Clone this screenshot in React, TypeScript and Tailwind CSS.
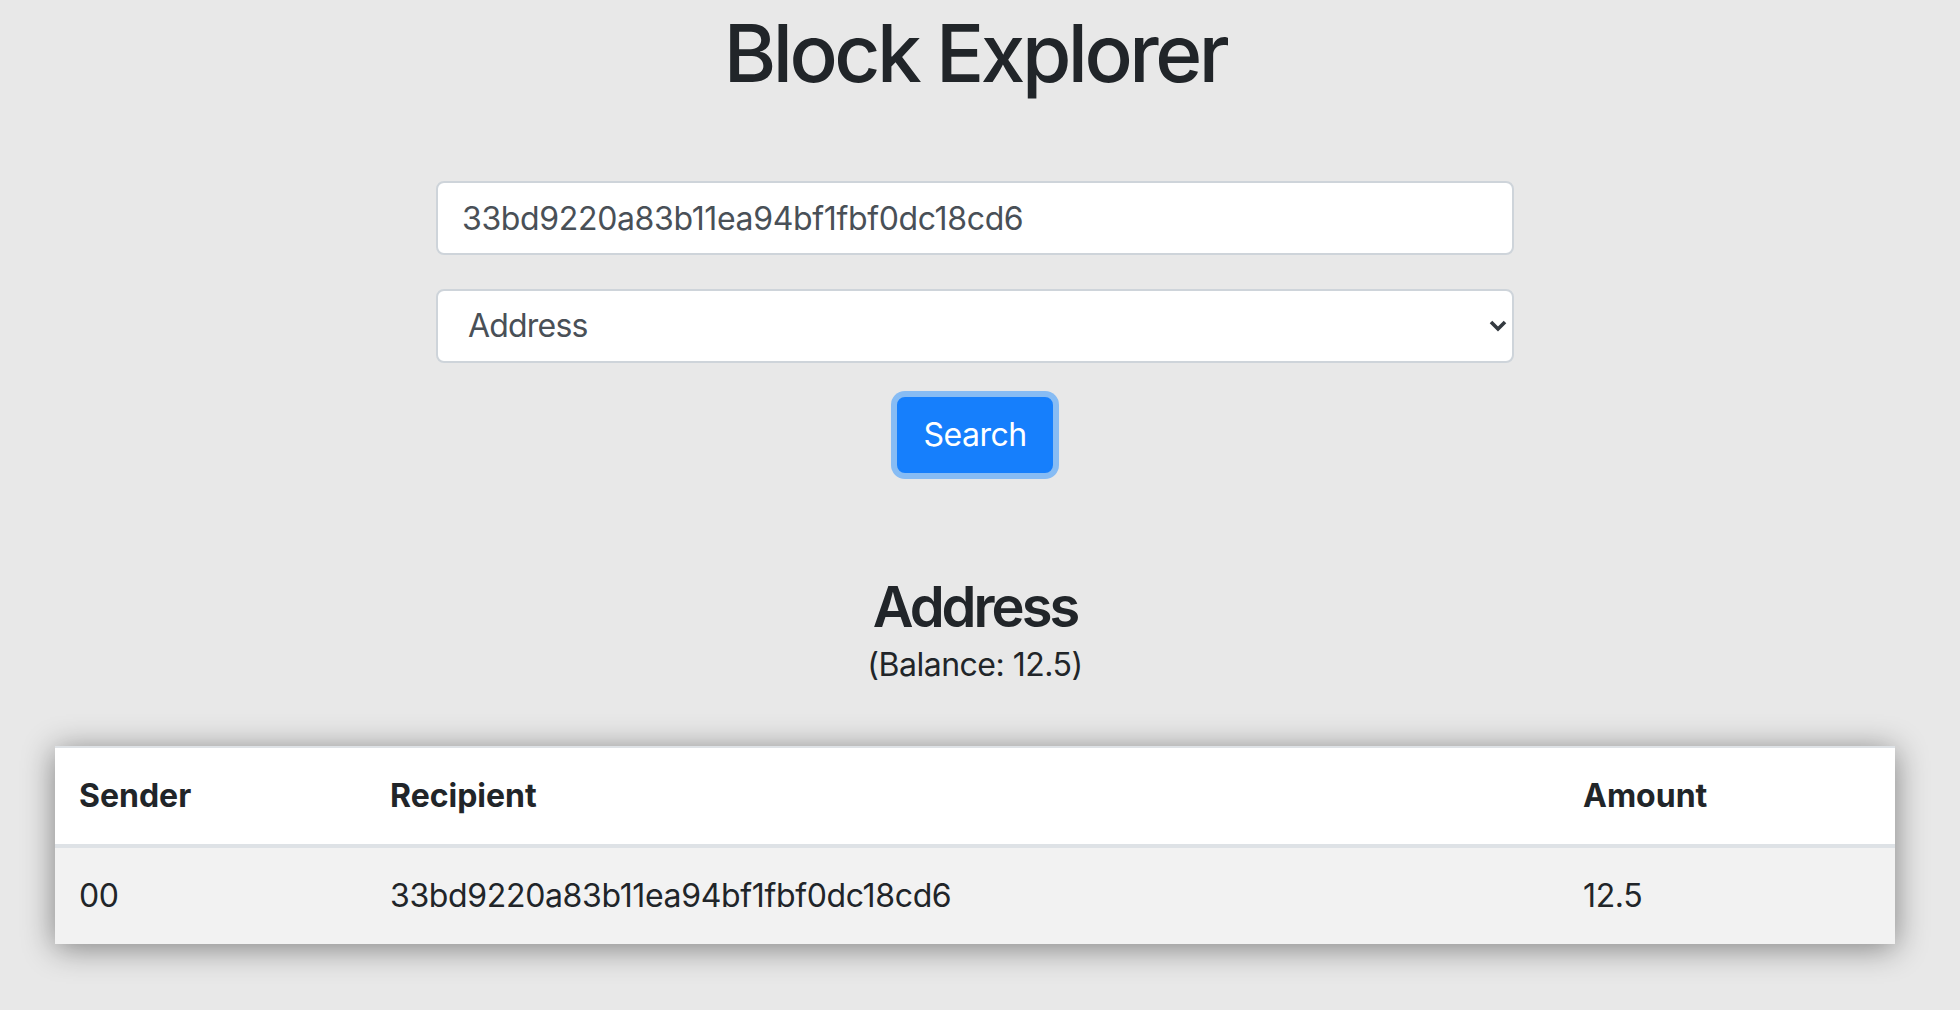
import { ChangeEvent, useState } from 'react';

type Tx = { sender: string; recipient: string; amount: number };

const txs: Tx[] = [
  { sender: '00', recipient: '33bd9220a83b11ea94bf1fbf0dc18cd6', amount: 12.5 },
];

export default function App() {
  const [query, setQuery] = useState('33bd9220a83b11ea94bf1fbf0dc18cd6');
  const [kind, setKind] = useState('address');

  return (
    <div className="min-h-screen w-full bg-[#e8e8e8] text-[#212529] font-['Inter','Noto_Sans',sans-serif]">
      <div className="w-[1950px] flex flex-col items-center">
        {/* Title */}
        <h1 className="pt-[5px] text-[80px] leading-[96px] font-medium tracking-[-3.5px]">Block Explorer</h1>

        {/* Search form */}
        <div className="mt-[80px] w-[1078px] flex flex-col items-center">
          <input
            value={query}
            onChange={(e: ChangeEvent<HTMLInputElement>) => setQuery(e.target.value)}
            className="w-full h-[74px] px-[24px] bg-white border-2 border-[#ced4da] rounded-[8px] text-[32px] tracking-[-0.35px] text-[#495057] outline-none"
          />
          <div className="relative w-full mt-[34px]">
            <select
              value={kind}
              onChange={(e: ChangeEvent<HTMLSelectElement>) => setKind(e.target.value)}
              className="appearance-none w-full h-[74px] pl-[30px] pr-[60px] bg-white border-2 border-[#ced4da] rounded-[8px] text-[32px] tracking-[-0.8px] text-[#495057] outline-none"
            >
              <option value="block">Block Hash</option>
              <option value="transaction">Transaction ID</option>
              <option value="address">Address</option>
            </select>
            <svg
              className="absolute right-[7px] top-[30px] pointer-events-none"
              width="18"
              height="14"
              viewBox="0 0 18 14"
            >
              <path d="M2 3 L9 10 L16 3" fill="none" stroke="#343a40" strokeWidth="3.6" />
            </svg>
          </div>
          <button className="mt-[34px] h-[76px] px-[24px] rounded-[8px] bg-[#167ffc] text-white text-[32px] tracking-[-0.5px] border-2 border-[#167ffc] shadow-[0_0_0_6px_rgba(38,143,255,0.5)]">
            Search
          </button>
        </div>

        {/* Result heading */}
        <h3 className="mt-[101px] text-[56px] leading-[67px] font-semibold tracking-[-3px]">Address</h3>
        <p className="text-[32px] leading-[48px] tracking-[-0.5px]">(Balance: 12.5)</p>

        {/* Transactions */}
        <table className="mt-[57px] w-[1840px] bg-white border-collapse text-[32px] leading-[48px] shadow-[0_4px_30px_rgba(0,0,0,0.45)]">
          <thead>
            <tr>
              <th className="w-[311px] text-left font-bold px-[24px] py-[24px] border-t-2 border-b-4 border-[#dee2e6]">Sender</th>
              <th className="text-left font-bold px-[24px] py-[24px] border-t-2 border-b-4 border-[#dee2e6]">Recipient</th>
              <th className="w-[336px] text-left font-bold px-[24px] py-[24px] border-t-2 border-b-4 border-[#dee2e6]">Amount</th>
            </tr>
          </thead>
          <tbody>
            {txs.map((tx, i) => (
              <tr key={i} className="bg-[#f2f2f2]">
                <td className="px-[24px] py-[24px] tracking-[-0.35px]">{tx.sender}</td>
                <td className="px-[24px] py-[24px] tracking-[-0.35px]">{tx.recipient}</td>
                <td className="px-[24px] py-[24px] tracking-[-0.35px]">{tx.amount}</td>
              </tr>
            ))}
          </tbody>
        </table>
      </div>
    </div>
  );
}
